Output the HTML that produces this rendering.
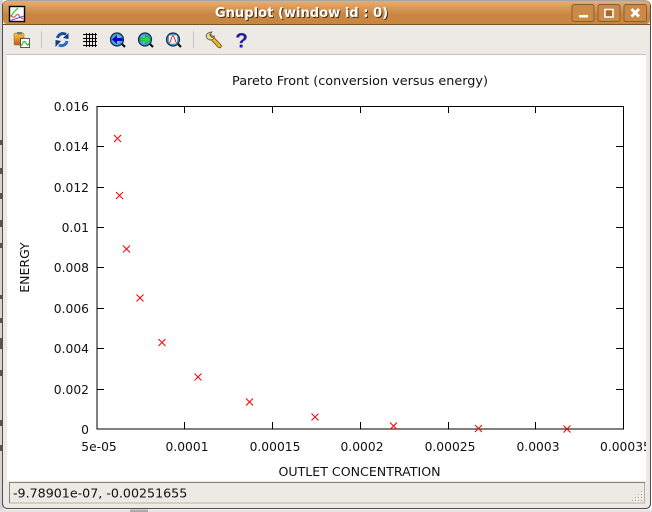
<!DOCTYPE html>
<html><head><meta charset="utf-8"><style>
html,body{margin:0;padding:0;width:652px;height:512px;overflow:hidden;background:#fff}
svg{display:block}
text{font-family:"DejaVu Sans",sans-serif;font-size:12.3px;fill:#111}
</style></head><body>
<svg width="652" height="512" viewBox="0 0 652 512" xmlns="http://www.w3.org/2000/svg">
<defs>
<linearGradient id="tb" x1="0" y1="0" x2="0" y2="1"><stop offset="0" stop-color="#e6ad72"/><stop offset=".6" stop-color="#c98540"/><stop offset="1" stop-color="#c88741"/></linearGradient>
<linearGradient id="clip" x1="0" y1="0" x2="0" y2="1"><stop offset="0" stop-color="#f2d23a"/><stop offset="1" stop-color="#c8541c"/></linearGradient>
<radialGradient id="lens"><stop offset="0" stop-color="#b5e0f5"/><stop offset="1" stop-color="#2f86c4"/></radialGradient>
</defs>
<rect width="652" height="512" fill="#fff"/>
<!-- desktop behind -->
<rect x="0" y="0" width="3" height="512" fill="#d4d4d4"/>
<g fill="#555"><rect x="0" y="140" width="2" height="5"/><rect x="0" y="168" width="2" height="6"/><rect x="0" y="193" width="2" height="6"/><rect x="0" y="220" width="2" height="7"/><rect x="0" y="243" width="2" height="5"/><rect x="0" y="295" width="2" height="4"/><rect x="0" y="318" width="2" height="5"/><rect x="0" y="338" width="2" height="11"/><rect x="0" y="370" width="2" height="6"/><rect x="0" y="420" width="2" height="6"/><rect x="0" y="445" width="2" height="6"/></g>
<rect x="0" y="509.500" width="652" height="2.500" fill="#e4e4e4"/>
<rect x="130" y="509.500" width="18" height="2.500" fill="#aaa"/>
<!-- window -->
<rect x="2.500" y="1" width="648" height="507.500" rx="5" fill="#edeae5" stroke="#4e4e4e"/>
<rect x="3" y="1" width="647" height="23" rx="4" fill="url(#tb)"/>
<rect x="3" y="24" width="647" height="1" fill="#7a5228"/>
<!-- title icon -->
<rect x="9.500" y="6.500" width="15" height="15" fill="#fff" stroke="#000" stroke-width="1.400"/>
<path d="M10.500 17L14 12L18 8" fill="none" stroke="#4d4" stroke-width="1.500"/><path d="M11 15Q13 19 15.500 16T19 15.500T24 19" fill="none" stroke="#e44" stroke-width="1.100"/><path d="M10.500 20.500L24 16" fill="none" stroke="#55d" stroke-width="1.100"/>
<text x="302.500" y="18" text-anchor="middle" style="font-size:13.100px;font-weight:bold;fill:#4a3116">Gnuplot (window id : 0)</text>
<text x="301.500" y="17" text-anchor="middle" style="font-size:13.100px;font-weight:bold;fill:#fff">Gnuplot (window id : 0)</text>
<!-- window buttons -->
<g fill="#cb8a48" stroke="#8a5e30"><rect x="572" y="4.500" width="22" height="17" rx="2"/><rect x="598" y="4.500" width="22" height="17" rx="2"/><rect x="624" y="4.500" width="22.500" height="17" rx="2"/></g>
<rect x="579" y="15" width="9" height="2.500" fill="#fff"/>
<rect x="605" y="9.500" width="8" height="7.500" fill="#a8682c" stroke="#fff" stroke-width="1.500"/>
<path d="M631.500 9L639 16.500M639 9L631.500 16.500" stroke="#fff" stroke-width="2.800"/>
<!-- toolbar -->
<rect x="41" y="31" width="1" height="17" fill="#c8c4bc"/><rect x="193" y="31" width="1" height="17" fill="#c8c4bc"/>
<rect x="14" y="33" width="10" height="12" rx="1" fill="url(#clip)" stroke="#8a6a20" stroke-width=".5"/><rect x="17" y="32" width="5" height="2.500" fill="#777"/>
<rect x="20.500" y="38.500" width="9" height="9" fill="#fff" stroke="#333" stroke-width=".8"/><path d="M21.500 46Q24 39 26 43T29 43" fill="none" stroke="#2b2" stroke-width="1.200"/>
<path d="M57.500 38A5.500 5.500 0 0 1 66 34.500" fill="none" stroke="#1a4fa0" stroke-width="3"/><path d="M63 38L68.500 33V39Z" fill="#123c80"/>
<path d="M67 41A5.500 5.500 0 0 1 59 45" fill="none" stroke="#2a6ac8" stroke-width="3"/><path d="M61 41L55.500 47V40Z" fill="#123c80"/>
<path d="M86.500 33V47M89.500 33V47M92.500 33V47M95.500 33V47M83 34.500H97M83 38.500H97M83 41.500H97M83 45.500H97" stroke="#000" fill="none"/>
<circle cx="117" cy="39.500" r="6.500" fill="url(#lens)" stroke="#0d3050" stroke-width="1.200"/><path d="M122 44L125 47" stroke="#111" stroke-width="2.200"/><path d="M112 39.500L117 35V38H122.500V41H117V44Z" fill="#0000d8"/>
<circle cx="145" cy="39.500" r="6.500" fill="url(#lens)" stroke="#0d3050" stroke-width="1.200"/><path d="M150 44L153 47" stroke="#111" stroke-width="2.200"/><path d="M150.500 39.500L145.500 35V38H140V41H145.500V44Z" fill="#10f020" stroke="#063" stroke-width=".4"/>
<circle cx="173" cy="39.500" r="6.500" fill="url(#lens)" stroke="#0d3050" stroke-width="1.200"/><path d="M178 44L181 47" stroke="#111" stroke-width="2.200"/><rect x="169" y="35.500" width="8" height="8" fill="#fff"/><path d="M169 43C171 43 171 36 173 36S175 43 177 43" fill="none" stroke="#d22"/>
<path d="M210 36L219.500 46" stroke="#5c4a18" stroke-width="4.500" stroke-linecap="round"/><path d="M210 36L219.500 46" stroke="#f2b91e" stroke-width="2.800" stroke-linecap="round"/><path d="M206 36Q207 32 212 32L209.500 34.500L212 37.500L214.500 36Q214 40 210 40Q207 39.500 206 36Z" fill="#f0dc80" stroke="#444" stroke-width=".7"/>
<text x="241.500" y="47.500" text-anchor="middle" style="font-size:21px;font-weight:bold;fill:#1c1c9c;font-family:'Liberation Sans',sans-serif">?</text>
<rect x="6" y="54" width="640" height="1" fill="#c8c4bc"/>
<!-- drawing -->
<rect x="7" y="55" width="639" height="426" fill="#fff"/>
<text x="360" y="85" text-anchor="middle" style="font-size:12.800px">Pareto Front (conversion versus energy)</text>
<rect x="97" y="106.500" width="526.500" height="322.500" fill="none" stroke="#000"/>
<path d="M97 146.500h7M97 187.500h7M97 227.500h7M97 267.500h7M97 308.500h7M97 348.500h7M97 389.500h7M623 146.500h-7M623 187.500h-7M623 227.500h-7M623 267.500h-7M623 308.500h-7M623 348.500h-7M623 389.500h-7M184.500 429v-7M272.500 429v-7M360.500 429v-7M448.500 429v-7M535.500 429v-7M184.500 106v7M272.500 106v7M360.500 106v7M448.500 106v7M535.500 106v7" stroke="#000" fill="none"/>
<g text-anchor="end">
<text x="89" y="111">0.016</text><text x="89" y="151">0.014</text><text x="89" y="192">0.012</text><text x="89" y="232">0.01</text><text x="89" y="272">0.008</text><text x="89" y="313">0.006</text><text x="89" y="353">0.004</text><text x="89" y="394">0.002</text><text x="89" y="434">0</text>
</g>
<g text-anchor="middle">
<text x="99" y="451">5e-05</text><text x="187" y="451">0.0001</text><text x="275" y="451">0.00015</text><text x="362" y="451">0.0002</text><text x="450" y="451">0.00025</text><text x="538" y="451">0.0003</text>
<text x="359.500" y="476" style="font-size:12.600px">OUTLET CONCENTRATION</text>
</g>
<text x="600" y="451">0.00035</text>
<text transform="translate(29 267.500) rotate(-90)" text-anchor="middle" style="font-size:12.500px">ENERGY</text>
<g stroke="#f00" fill="none">
<path d="M114 135l7 7m0-7l-7 7"/><path d="M116 192l7 7m0-7l-7 7"/><path d="M123 245.500l7 7m0-7l-7 7"/><path d="M136.500 294.500l7 7m0-7l-7 7"/><path d="M158.500 339l7 7m0-7l-7 7"/><path d="M194.500 373.500l7 7m0-7l-7 7"/><path d="M246 398.500l7 7m0-7l-7 7"/><path d="M311.500 413.500l7 7m0-7l-7 7"/><path d="M390 422.500l7 7m0-7l-7 7"/><path d="M475 425l7 7m0-7l-7 7"/><path d="M563.500 425.500l7 7m0-7l-7 7"/>
</g>
<!-- frame over clipped label -->
<rect x="646" y="55" width="4" height="453" fill="#edeae5"/>
<rect x="3" y="481" width="647" height="27" fill="#edeae5"/>
<rect x="9.500" y="482.500" width="635" height="20.500" fill="#edeae5" stroke="#b5b1a9"/>
<path d="M9.500 503V482.500H645" fill="none" stroke="#85827c"/>
<text x="13" y="497.500" style="font-size:12.650px">-9.78901e-07, -0.00251655</text>
<g fill="#fff"><rect x="642" y="492" width="1" height="1"/><rect x="639" y="495" width="1" height="1"/><rect x="642" y="495" width="1" height="1"/><rect x="636" y="498" width="1" height="1"/><rect x="639" y="498" width="1" height="1"/><rect x="642" y="498" width="1" height="1"/><rect x="633" y="501" width="1" height="1"/><rect x="636" y="501" width="1" height="1"/><rect x="639" y="501" width="1" height="1"/><rect x="642" y="501" width="1" height="1"/></g>
<g fill="#a8a49c"><rect x="641" y="491" width="1" height="1"/><rect x="638" y="494" width="1" height="1"/><rect x="641" y="494" width="1" height="1"/><rect x="635" y="497" width="1" height="1"/><rect x="638" y="497" width="1" height="1"/><rect x="641" y="497" width="1" height="1"/><rect x="632" y="500" width="1" height="1"/><rect x="635" y="500" width="1" height="1"/><rect x="638" y="500" width="1" height="1"/><rect x="641" y="500" width="1" height="1"/></g>
<path d="M2.500 6V503Q2.500 508.500 8 508.500H645Q650.500 508.500 650.500 503V6" fill="none" stroke="#4e4e4e"/>
</svg>
</body></html>
